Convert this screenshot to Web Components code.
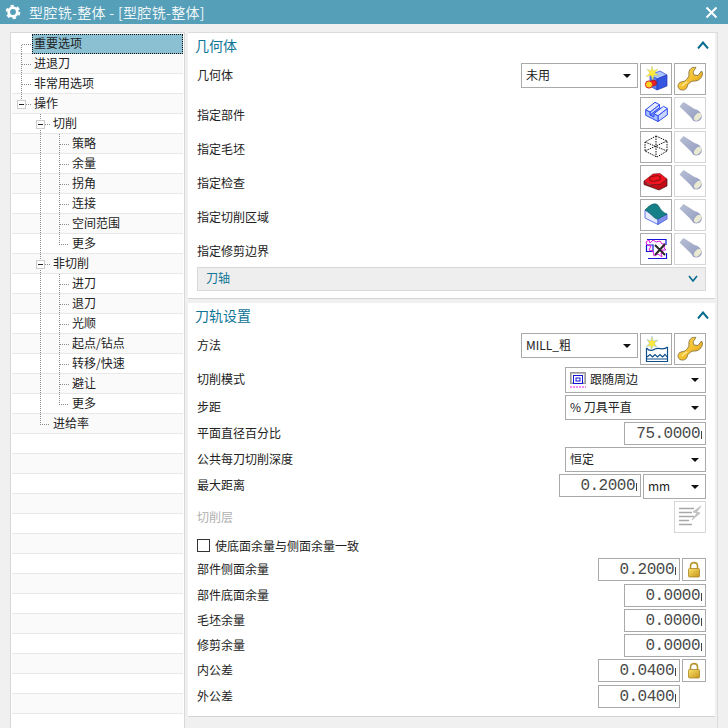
<!DOCTYPE html>
<html lang="zh">
<head>
<meta charset="utf-8">
<title>型腔铣-整体</title>
<style>
  html, body { margin: 0; height: 100%; overflow: hidden; background: #f0f0f0; }
  body { font: 12px/16px "Noto Sans CJK SC", "Liberation Sans", sans-serif; color: #222; }
</style>
</head>
<body>
<op-dialog heading="型腔铣-整体 - [型腔铣-整体]">
  <op-tree slot="tree">
    <tree-row cells="r" selected>重要选项</tree-row>
    <tree-row cells="t">进退刀</tree-row>
    <tree-row cells="t">非常用选项</tree-row>
    <tree-row cells="lb">操作</tree-row>
    <tree-row cells="e tb">切削</tree-row>
    <tree-row cells="e v t">策略</tree-row>
    <tree-row cells="e v t">余量</tree-row>
    <tree-row cells="e v t">拐角</tree-row>
    <tree-row cells="e v t">连接</tree-row>
    <tree-row cells="e v t">空间范围</tree-row>
    <tree-row cells="e v l">更多</tree-row>
    <tree-row cells="e tb">非切削</tree-row>
    <tree-row cells="e v t">进刀</tree-row>
    <tree-row cells="e v t">退刀</tree-row>
    <tree-row cells="e v t">光顺</tree-row>
    <tree-row cells="e v t">起点/钻点</tree-row>
    <tree-row cells="e v t">转移/快速</tree-row>
    <tree-row cells="e v t">避让</tree-row>
    <tree-row cells="e v l">更多</tree-row>
    <tree-row cells="e l">进给率</tree-row>
  </op-tree>

  <op-panel heading="几何体">
    <op-row label="几何体" top style="height:32px">
      <op-select style="width:117px;height:25px">未用</op-select>
      <op-btn icon="geom"></op-btn>
      <op-btn icon="wrench"></op-btn>
    </op-row>
    <op-row label="指定部件" low style="height:32px"><op-btn icon="part"></op-btn><op-btn icon="torch" off></op-btn></op-row>
    <op-row label="指定毛坯" low style="height:32px"><op-btn icon="blank"></op-btn><op-btn icon="torch" off></op-btn></op-row>
    <op-row label="指定检查" low style="height:32px"><op-btn icon="check"></op-btn><op-btn icon="torch" off></op-btn></op-row>
    <op-row label="指定切削区域" low style="height:32px"><op-btn icon="area"></op-btn><op-btn icon="torch" off></op-btn></op-row>
    <op-row label="指定修剪边界" low style="height:32px"><op-btn icon="trim"></op-btn><op-btn icon="torch" off></op-btn></op-row>
    <op-fold>刀轴</op-fold>
  </op-panel>

  <op-panel heading="刀轨设置" last>
    <op-row label="方法" top style="height:32px">
      <op-select style="width:117px;height:25px">MILL_粗</op-select>
      <op-btn icon="method"></op-btn>
      <op-btn icon="wrench"></op-btn>
    </op-row>
    <op-row label="切削模式" style="height:26px">
      <op-select style="width:141px;height:26px"><op-icon name="pattern" style="width:16px;height:16px;margin-right:4px;margin-top:2px"></op-icon>跟随周边</op-select>
    </op-row>
    <op-row label="步距" style="height:25px"><op-select style="width:141px;height:25px">% 刀具平直</op-select></op-row>
    <op-row label="平面直径百分比" style="height:23px"><op-num>75.0000</op-num></op-row>
    <op-row label="公共每刀切削深度" style="height:25px"><op-select style="width:141px;height:25px">恒定</op-select></op-row>
    <op-row label="最大距离" top style="height:25px;--lh:21px">
      <op-num>0.2000</op-num>
      <op-select style="width:63px;height:25px">mm</op-select>
    </op-row>
    <op-row label="切削层" off style="height:32px"><op-btn icon="layer" off></op-btn></op-row>
    <op-check style="height:21px">使底面余量与侧面余量一致</op-check>
    <op-row label="部件侧面余量" top style="height:24px;--lh:21px"><op-num>0.2000</op-num><op-btn icon="lock" style="width:24px;height:23px"></op-btn></op-row>
    <op-row label="部件底面余量" style="height:23px"><op-num>0.0000</op-num></op-row>
    <op-row label="毛坯余量" style="height:23px"><op-num>0.0000</op-num></op-row>
    <op-row label="修剪余量" style="height:23px"><op-num>0.0000</op-num></op-row>
    <op-row label="内公差" top style="height:24px;--lh:21px"><op-num>0.0400</op-num><op-btn icon="lock" style="width:24px;height:23px"></op-btn></op-row>
    <op-row label="外公差" style="height:23px"><op-num style="margin-right:26px">0.0400</op-num></op-row>
  </op-panel>
</op-dialog>

<script>
// icons are drawn on a 32x32 box unless the svg says otherwise
const ICONS = {
  geom: `<svg viewBox="0 0 32 32">
    <path d="M10 12 20 8 27 12 17 16Z" fill="#a9c4ff" stroke="#2b3fc8" stroke-width=".7"/>
    <path d="M10 12 17 16V27L10 23Z" fill="#5f83f0" stroke="#2b3fc8" stroke-width=".7"/>
    <path d="M17 16 27 12V23L17 27Z" fill="#3556e0" stroke="#2338b0" stroke-width=".7"/>
    <path d="M12 3 13.400 8 18 6 14.800 10 19 12.500 14 12 13 17 11 12.500 6 13.500 9.800 10 7 6 11 8Z" fill="#ffe93c" stroke="#b8c46a" stroke-width=".4"/>
    <circle cx="13.500" cy="20" r="3" fill="#e8222a" stroke="#901018" stroke-width=".6"/>
    <circle cx="9" cy="21.500" r="3.600" fill="#ffd21e" stroke="#d81c24" stroke-width="1"/></svg>`,
  wrench: `<svg viewBox="0 0 32 32"><defs><linearGradient id="w" x1="0" y1="0" x2="1" y2="1"><stop offset="0" stop-color="#ffe35e"/><stop offset=".6" stop-color="#f2bb2c"/><stop offset="1" stop-color="#c88a12"/></linearGradient></defs>
    <path d="M22 4.500C18 3.500 14 6.500 15 12 15 14 13 16 11 18L7 19C3.500 20 3 24.500 6 26.500 9 28 12.500 26.500 13 24L14 21.500C16 19 18 18 20 18 24 18.500 28.500 15 28.500 10L27.500 8 24 12.500 20 12 19 9Z" fill="url(#w)" stroke="#7a6a38" stroke-width=".8" stroke-linejoin="round"/>
    <path d="M8 23C9.500 21 11 20 13 19" fill="none" stroke="#fff3b0" stroke-width="1.200"/></svg>`,
  torch: `<svg viewBox="0 0 32 32"><defs><linearGradient id="t" x1="0" y1="0" x2="1" y2="1"><stop offset="0" stop-color="#b9c0d6"/><stop offset="1" stop-color="#8f99bd"/></linearGradient></defs>
    <path d="M5.500 9.500 9.500 5 20.500 12 23.500 13C26.500 14.500 28.500 18 27.500 21 26.500 24.500 22 25 19.500 24L16.500 20Z" fill="url(#t)"/>
    <ellipse cx="23.700" cy="19.700" rx="4.500" ry="2.800" transform="rotate(-50 23.700 19.700)" fill="#e9e9d2"/></svg>`,
  part: `<svg viewBox="0 0 32 32"><g stroke="#2f49f0" stroke-width="1" stroke-linejoin="round">
    <path d="M18 18.700 27.300 11.500V18L18 24.500Z" fill="#c7d6ff"/>
    <path d="M10 18 19.500 10.700 23.500 12.700 14 20Z" fill="#7f9cf5"/>
    <path d="M10 15 19.500 7.700V10.700L10 18Z" fill="#c7d6ff"/>
    <path d="M5.700 12.700 10 15V18L14 20V16.700L18 18.700V24.500L5.700 18.300Z" fill="#a9c0ff"/>
    <path d="M5.700 12.700 15 5.300 19.500 7.700 10 15Z" fill="#e6ecff"/>
    <path d="M14 16.700 23.500 9.300 27.300 11.500 18 18.700Z" fill="#e6ecff"/></g></svg>`,
  blank: `<svg viewBox="0 0 32 32"><path d="M16 5 27 10 27 20 17 26 5 20 5 11ZM5 11 27 20M27 10 5 20M16 5V26" fill="none" stroke="#111" stroke-width="1" stroke-dasharray="1.500 1"/></svg>`,
  check: `<svg viewBox="0 0 32 32"><path d="M4 16 4 19.500 19 25 27 21 27 14 20 19 9 20Z" fill="#c00d18" stroke="#401014" stroke-width=".7"/>
    <path d="M4 16 13 9 20 8.500 27 14 20 19.500 10 19.500Z" fill="#f2141f" stroke="#70101a" stroke-width=".6"/>
    <ellipse cx="15" cy="13.500" rx="5.500" ry="2.500" transform="rotate(-8 15 13.500)" fill="none" stroke="#8a0c14" stroke-width="1"/></svg>`,
  area: `<svg viewBox="0 0 32 32"><path d="M5 11 18 20V25.500L5 19Z" fill="#e4eaff" stroke="#3f58e0" stroke-width=".8"/>
    <path d="M18 20 27 15V20L18 25.500Z" fill="#8291e8" stroke="#3f58e0" stroke-width=".8"/>
    <path d="M5 11C8 8 12 4 16 5 20 6 19 12 27 15L18 20C13 20 12 14 5 11Z" fill="#168088" stroke="#0e5a60" stroke-width=".6"/></svg>`,
  trim: `<svg viewBox="0 0 32 32"><path d="M7 6.500H26V12M6.500 12H13V18.500H6.500ZM8 25.500H26.500V20" fill="none" stroke="#1414d8" stroke-width="1.200"/>
    <path d="M6 9 9 7 10 10 13 7 16 9 20 8 22 11 25 11 24 15 26 17 22 17 24 21 21 20 22 24 18 21 14 23 13 18 9 17 11 13 7 12Z" fill="none" stroke="#e018e0" stroke-width="1"/>
    <path d="M15 12 25 22M25 11 15 22" stroke="#2a2a2a" stroke-width="2"/></svg>`,
  method: `<svg viewBox="0 0 32 32"><path d="M6.500 15V28.500H27.500V14" fill="none" stroke="#0f4f8c" stroke-width="1.200"/>
    <path d="M6.500 15C9 18 12 18 15 16 19 14 23 18 27.500 14" fill="none" stroke="#0f4f8c" stroke-width="1.200"/>
    <path d="M7 24 10 21.500 12.500 24 15 21.500 17.500 24 20 21.500 22.500 24 25 21.500 27 24M6.500 26H27.500" fill="none" stroke="#0f4f8c" stroke-width="1.200"/>
    <path d="M12 3 13.200 8 18 7 14.500 10.500 17 14 13 12.800 11.500 17 10.500 12.800 6 13.500 9.500 10.500 7 6.500 10.800 8Z" fill="#ffe93c" stroke="#8ec0d8" stroke-width=".5"/></svg>`,
  layer: `<svg viewBox="0 0 32 32"><path d="M5 7.500H20M5 11.500H18M5 15.500H20M5 19.500H15M5 23.500H18" stroke="#a8a8a8" stroke-width="1.600"/>
    <path d="M27 5 19 11 23 12 18 19 26 12 22.500 11Z" fill="#c4c4c4" stroke="#bbb" stroke-width=".8"/></svg>`,
  lock: `<svg viewBox="0 0 24 23"><defs><linearGradient id="l" x1="0" y1="0" x2="1" y2="1"><stop offset="0" stop-color="#fbe36a"/><stop offset="1" stop-color="#c8941a"/></linearGradient></defs>
    <path d="M8.500 11V8C8.500 3.500 15.500 3.500 15.500 8V11" fill="none" stroke="#b8962e" stroke-width="1.600"/>
    <rect x="6.500" y="10.500" width="11" height="8.500" rx="1" fill="url(#l)" stroke="#a8862a" stroke-width=".8"/></svg>`,
  pattern: `<svg viewBox="0 0 16 16"><rect x=".5" y=".5" width="15" height="11" fill="none" stroke="#333" stroke-dasharray="1 1"/>
    <rect x="1.500" y="1.500" width="13" height="9" fill="none" stroke="#777" stroke-dasharray="1 1"/>
    <rect x="3.500" y="3.500" width="9" height="8" fill="#fff" stroke="#1414d8"/><rect x="6" y="6" width="4" height="3" fill="none" stroke="#1414d8"/>
    <path d="M0 15H16" stroke="#e018e0" stroke-dasharray="2 1"/></svg>`
};

class OpIcon extends HTMLElement {
  connectedCallback() {
    const root = this.shadowRoot || this.attachShadow({ mode: 'open' });
    root.innerHTML = `<style>:host{display:block;flex:none} svg{display:block;width:100%;height:100%}</style>${ICONS[this.getAttribute('name')]}`;
  }
}

class OpDialog extends HTMLElement {
  constructor() {
    super();
    this.attachShadow({ mode: 'open' }).innerHTML = `
      <style>
        :host { display: flex; flex-direction: column; width: 728px; height: 728px; overflow: hidden; }
        header { flex: none; height: 24px; background: #559fb9; color: #eef6f8; display: flex; align-items: center; padding: 0 10px 0 6px; font-size: 14px; letter-spacing: .33px; }
        header span { flex: 1; margin-left: 9px; }
        main { flex: 1; min-height: 0; display: flex; gap: 3px; padding: 8px 10px 0; }
        .forms { width: 527px; flex: none; border: solid #dcdcdc; border-width: 1px 1px 0 0; padding-right: 2px; display: flex; flex-direction: column; gap: 4px; }
      </style>
      <header>
        <svg viewBox="0 0 14 14" style="overflow:visible;width:14px;height:14px;flex:none"><circle cx="7" cy="7" r="4.300" fill="none" stroke="#fff" stroke-width="2.800"/><circle cx="7" cy="7" r="6.300" fill="none" stroke="#fff" stroke-width="2" stroke-dasharray="3.300 3.300"/></svg>
        <span></span>
        <svg width="13" height="13" viewBox="0 0 13 13"><path d="M1.500 1.500 11.500 11.500M11.500 1.500 1.500 11.500" stroke="#fff" stroke-width="2"/></svg>
      </header>
      <main><slot name="tree"></slot><div class="forms"><slot></slot></div></main>`;
  }
  connectedCallback() {
    this.shadowRoot.querySelector('header span').textContent = this.getAttribute('heading');
  }
}

class OpTree extends HTMLElement {
  constructor() {
    super();
    this.attachShadow({ mode: 'open' }).innerHTML = `
      <style>
        :host { display: block; flex: none; width: 175px; box-sizing: border-box; border: solid #d8d8d8; border-width: 1px 1px 0 1px; padding: 1px 1px 0 1px; background: #fff; overflow: hidden; }
      </style><slot></slot>`;
  }
  connectedCallback() {
    // empty rows fill the rest of the list
    for (let i = this.children.length; i < 35; i++) this.appendChild(document.createElement('tree-row'));
  }
}

class TreeRow extends HTMLElement {
  constructor() {
    super();
    this.attachShadow({ mode: 'open' });
  }
  cell(kind) {
    const lines = { v: 'M9.500 0V20', t: 'M9.500 0V20M9.500 10.500H19', tb: 'M9.500 0V20M14 10.500H19', l: 'M9.500 0V10.500H19', lb: 'M9.500 0V6M14 10.500H19', r: 'M9.500 10.500V20M9.500 10.500H19', e: '' };
    const box = kind.endsWith('b')
      ? '<rect x="5.500" y="6.500" width="8" height="8" fill="#fff" stroke="#ccc"/><path d="M7 10.500H12" stroke="#222"/>' : '';
    return `<svg width="19" height="20" viewBox="0 0 19 20" shape-rendering="crispEdges"><path d="${lines[kind]}" fill="none" stroke="#8c8c8c" stroke-dasharray="1 1"/>${box}</svg>`;
  }
  connectedCallback() {
    const cells = (this.getAttribute('cells') || '').split(' ').filter(Boolean);
    this.shadowRoot.innerHTML = `
      <style>
        :host { display: flex; height: 20px; box-shadow: inset 0 -1px 0 #e8e8e8; }
        :host(:nth-child(even)) { background: #fafafa; }
        svg { display: block; flex: none; }
        .text { flex: 1; margin-left: 1px; padding-left: 1px; border: 1px dotted transparent; line-height: 15px; }
        :host([selected]) .text { background: #8bc0d2; border-color: #111; }
      </style>
      ${cells.map(c => this.cell(c)).join('')}
      ${cells.length ? '<div class="text"><slot></slot></div>' : ''}`;
  }
}

class OpPanel extends HTMLElement {
  constructor() {
    super();
    this.attachShadow({ mode: 'open' }).innerHTML = `
      <style>
        :host { display: block; background: #fff; border-bottom: 1px solid #d4d4d4; padding: 0 9px 7px; }
        :host([last]) { padding-bottom: 8px; }
        header { height: 24px; padding-bottom: 6px; display: flex; align-items: center; justify-content: space-between; margin: 0 -3px 0 -2px; color: #0f7596; font-size: 14px; }
        .body { display: flex; flex-direction: column; gap: 2px; }
      </style>
      <header><span></span><svg width="12" height="8" viewBox="0 0 12 8"><path d="M1 7.500 6 1.500 11 7.500" fill="none" stroke="#056c8e" stroke-width="2"/></svg></header>
      <div class="body"><slot></slot></div>`;
  }
  connectedCallback() {
    this.shadowRoot.querySelector('header span').textContent = this.getAttribute('heading');
  }
}

class OpRow extends HTMLElement {
  constructor() {
    super();
    this.attachShadow({ mode: 'open' }).innerHTML = `
      <style>
        :host { display: flex; align-items: center; justify-content: space-between; }
        .label { padding-bottom: 2px; }
        :host([top]) { align-items: flex-start; }
        :host([top]) .label { padding: 0; line-height: var(--lh, 23px); }
        :host([low]) .label { margin-top: 6px; }
        :host([off]) .label { color: #b0b0b0; margin-top: 2px; }
        .controls { display: flex; gap: 2px; align-items: flex-start; }
      </style>
      <div class="label"></div><div class="controls"><slot></slot></div>`;
  }
  connectedCallback() {
    this.shadowRoot.querySelector('.label').textContent = this.getAttribute('label');
  }
}

class OpSelect extends HTMLElement {
  constructor() {
    super();
    this.attachShadow({ mode: 'open' }).innerHTML = `
      <style>
        :host { display: flex; align-items: center; box-sizing: border-box; border: 1px solid #aaa; background: #fff; padding: 0 5px 0 4px; }
        .value { flex: 1; display: flex; align-items: center; padding-bottom: 2px; }
        i { flex: none; width: 0; height: 0; border: solid transparent; border-width: 4px 4px 0; border-top-color: #111; margin-right: 1px; }
      </style>
      <div class="value"><slot></slot></div><i></i>`;
  }
}

class OpNum extends HTMLElement {
  constructor() {
    super();
    this.attachShadow({ mode: 'open' }).innerHTML = `
      <style>
        :host { display: flex; align-items: center; justify-content: flex-end; box-sizing: border-box; width: 82px; height: 23px; border: 1px solid #aaa; background: #fff; padding: 2px 3px 0 0; font: 16px/19px "Liberation Mono", monospace; letter-spacing: -.5px; color: #4a4a4a; }
        i { width: 1px; height: 8px; background: #444; margin-left: 1px; }
      </style>
      <slot></slot><i></i>`;
  }
}

class OpBtn extends HTMLElement {
  constructor() {
    super();
    this.attachShadow({ mode: 'open' });
  }
  connectedCallback() {
    this.shadowRoot.innerHTML = `
      <style>
        :host { display: block; flex: none; box-sizing: border-box; width: 32px; height: 32px; border: 1px solid #aaa; background: #fff; }
        :host([off]) { border-color: #d6d6d6; }
        op-icon { width: 100%; height: 100%; }
        .wrap { margin: -1px; width: calc(100% + 2px); height: calc(100% + 2px); }
      </style>
      <div class="wrap"><op-icon name="${this.getAttribute('icon')}"></op-icon></div>`;
  }
}

class OpFold extends HTMLElement {
  constructor() {
    super();
    this.attachShadow({ mode: 'open' }).innerHTML = `
      <style>
        :host { display: flex; align-items: center; justify-content: space-between; box-sizing: border-box; height: 24px; background: #eee; border: solid #d8d8d8; border-width: 1px; padding: 0 7px 2px 8px; color: #0f7596; }
      </style>
      <slot></slot><svg width="10" height="7" viewBox="0 0 10 7"><path d="M1 1 5 6 9 1" fill="none" stroke="#056c8e" stroke-width="1.600"/></svg>`;
  }
}

class OpCheck extends HTMLElement {
  constructor() {
    super();
    this.attachShadow({ mode: 'open' }).innerHTML = `
      <style>
        :host { display: flex; align-items: center; gap: 5px; }
        i { flex: none; box-sizing: border-box; width: 13px; height: 13px; border: 1px solid #333; background: #fff; }
      </style>
      <i></i><slot></slot>`;
  }
}

customElements.define('op-icon', OpIcon);
customElements.define('op-dialog', OpDialog);
customElements.define('op-tree', OpTree);
customElements.define('tree-row', TreeRow);
customElements.define('op-panel', OpPanel);
customElements.define('op-row', OpRow);
customElements.define('op-select', OpSelect);
customElements.define('op-num', OpNum);
customElements.define('op-btn', OpBtn);
customElements.define('op-fold', OpFold);
customElements.define('op-check', OpCheck);
</script>
</body>
</html>
